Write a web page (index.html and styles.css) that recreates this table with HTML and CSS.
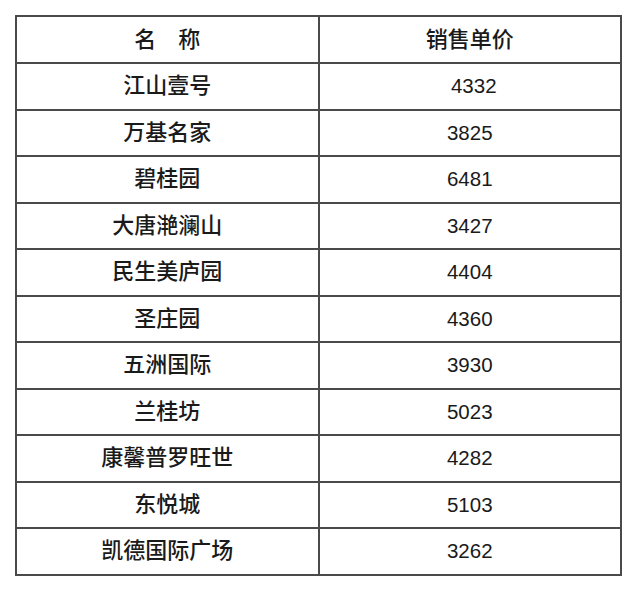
FILE: index.html
```html
<!DOCTYPE html>
<html lang="zh">
<head>
<meta charset="utf-8">
<title>销售单价</title>
<link rel="stylesheet" href="styles.css">
</head>
<body>
<table class="price-table">
  <thead>
    <tr><th>名　称</th><th>销售单价</th></tr>
  </thead>
  <tbody>
    <tr><td>江山壹号</td><td class="num shift">4332</td></tr>
    <tr><td>万基名家</td><td class="num">3825</td></tr>
    <tr><td>碧桂园</td><td class="num">6481</td></tr>
    <tr><td>大唐滟澜山</td><td class="num">3427</td></tr>
    <tr><td>民生美庐园</td><td class="num">4404</td></tr>
    <tr><td>圣庄园</td><td class="num">4360</td></tr>
    <tr><td>五洲国际</td><td class="num">3930</td></tr>
    <tr><td>兰桂坊</td><td class="num">5023</td></tr>
    <tr><td>康馨普罗旺世</td><td class="num">4282</td></tr>
    <tr><td>东悦城</td><td class="num">5103</td></tr>
    <tr><td>凯德国际广场</td><td class="num">3262</td></tr>
  </tbody>
</table>
</body>
</html>
```

FILE: styles.css
```css
html, body {
  margin: 0;
  background: #ffffff;
}
body {
  padding: 15px 0 0 15px;
  font-family: "Liberation Sans", "Noto Sans CJK SC", sans-serif;
  color: #1a1a1a;
}
.price-table {
  border-collapse: collapse;
  width: 607px;
  table-layout: fixed;
}
.price-table th,
.price-table td {
  border: 2px solid #4a4a4a;
  height: 44.5px;
  padding: 0;
  text-align: center;
  vertical-align: middle;
  font-size: 22px;
  font-weight: 500;
  line-height: 1;
}
.price-table th {
  height: 45px;
}
.price-table .num {
  font-size: 20.5px;
  font-weight: normal;
}
.price-table .shift {
  padding-left: 8px;
}
```
